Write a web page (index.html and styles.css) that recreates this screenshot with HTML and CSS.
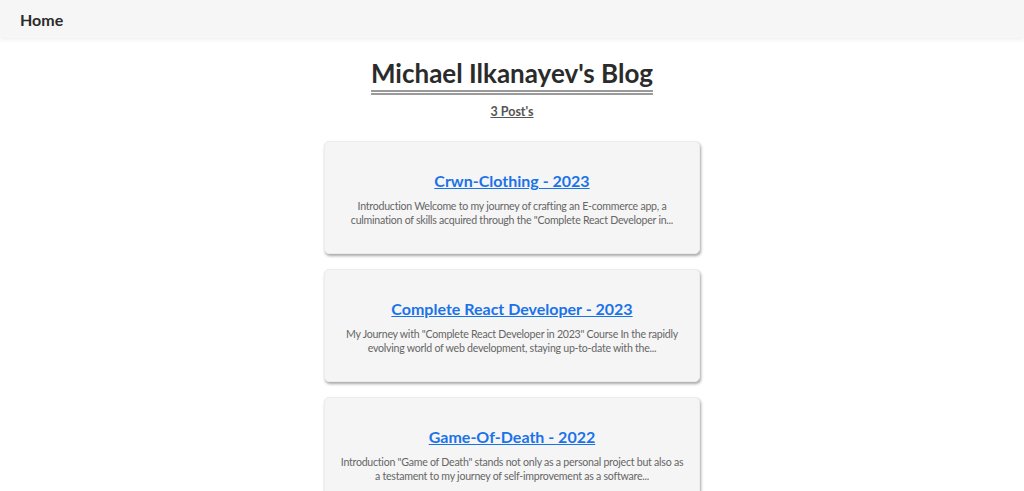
FILE: index.html
```html
<!DOCTYPE html>
<html lang="en">
<head>
<meta charset="utf-8">
<title>Michael Ilkanayev's Blog</title>
<link rel="stylesheet" href="styles.css">
</head>
<body>
<nav class="navbar">
  <a class="nav-link" href="#">Home</a>
</nav>
<main class="blog">
  <header class="blog-header">
    <h1 class="blog-title">Michael Ilkanayev's Blog</h1>
    <p class="post-count">3 Post's</p>
  </header>
  <section class="post-list">
    <article class="post-card">
      <a class="post-title" href="#">Crwn-Clothing - 2023</a>
      <p class="post-excerpt">Introduction Welcome to my journey of crafting an E-commerce app, a culmination of skills acquired through the "Complete React Developer in...</p>
    </article>
    <article class="post-card">
      <a class="post-title" href="#">Complete React Developer - 2023</a>
      <p class="post-excerpt">My Journey with "Complete React Developer in 2023" Course In the rapidly evolving world of web development, staying up-to-date with the...</p>
    </article>
    <article class="post-card">
      <a class="post-title" href="#">Game-Of-Death - 2022</a>
      <p class="post-excerpt">Introduction "Game of Death" stands not only as a personal project but also as a testament to my journey of self-improvement as a software...</p>
    </article>
  </section>
</main>
</body>
</html>
```

FILE: styles.css
```css
* {
  box-sizing: border-box;
}

html, body {
  margin: 0;
  padding: 0;
  background: #ffffff;
  font-family: "Lato", "Noto Sans", sans-serif;
  color: #333;
}

.navbar {
  height: 38px;
  display: flex;
  align-items: center;
  padding: 0 20px;
  background: #f6f6f6;
  box-shadow: 0 2px 4px rgba(0, 0, 0, 0.06);
}

.nav-link {
  font-size: 16px;
  font-weight: 700;
  color: #2b2b2b;
  text-decoration: none;
}

.blog {
  display: flex;
  flex-direction: column;
  align-items: center;
  padding-top: 19px;
}

.blog-header {
  display: flex;
  flex-direction: column;
  align-items: center;
}

.blog-title {
  margin: 0;
  font-size: 26px;
  font-weight: 700;
  color: #2b2b2b;
  line-height: 32px;
  padding-bottom: 1px;
  border-bottom: 5px double #9a9a9a;
}

.post-count {
  margin: 8px 0 0;
  font-size: 12.5px;
  font-weight: 700;
  color: #555;
  text-decoration: underline;
  line-height: 17px;
}

.post-list {
  display: flex;
  flex-direction: column;
  gap: 15px;
  margin-top: 21px;
  width: 376px;
}

.post-card {
  display: flex;
  flex-direction: column;
  align-items: center;
  text-align: center;
  padding: 28px 13px 26px;
  background: #f5f5f5;
  border: 1px solid #ececec;
  border-radius: 5px;
  box-shadow: 1px 2px 3px rgba(0, 0, 0, 0.35);
}

.post-title {
  font-size: 16px;
  font-weight: 700;
  color: #1a73e8;
  text-decoration: underline;
  line-height: 22px;
}

.post-excerpt {
  margin: 7px 0 0;
  font-size: 10.6px;
  letter-spacing: -0.25px;
  line-height: 14px;
  color: #666;
}
```
